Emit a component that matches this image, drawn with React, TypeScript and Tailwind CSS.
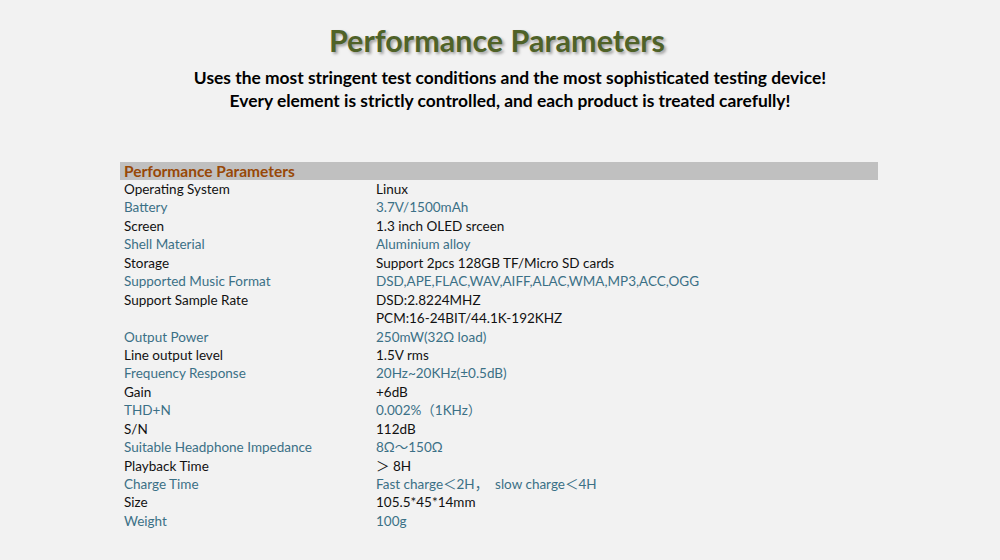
const rows: [string, string, boolean][] = [
  ["Operating System", "Linux", false],
  ["Battery", "3.7V/1500mAh", true],
  ["Screen", "1.3 inch OLED srceen", false],
  ["Shell Material", "Aluminium alloy", true],
  ["Storage", "Support 2pcs 128GB TF/Micro SD cards", false],
  ["Supported Music Format", "DSD,APE,FLAC,WAV,AIFF,ALAC,WMA,MP3,ACC,OGG", true],
  ["Support Sample Rate", "DSD:2.8224MHZ", false],
  ["", "PCM:16-24BIT/44.1K-192KHZ", false],
  ["Output Power", "250mW(32Ω load)", true],
  ["Line output level", "1.5V rms", false],
  ["Frequency Response", "20Hz~20KHz(±0.5dB)", true],
  ["Gain", "+6dB", false],
  ["THD+N", "0.002%（1KHz）", true],
  ["S/N", "112dB", false],
  ["Suitable Headphone Impedance", "8Ω～150Ω", true],
  ["Playback Time", "＞ 8H", false],
  ["Charge Time", "Fast charge＜2H，  slow charge＜4H", true],
  ["Size", "105.5*45*14mm", false],
  ["Weight", "100g", true],
];

export default function App() {
  return (
    <div className="w-[1000px] h-[560px] bg-[#f2f2f2] font-['Lato','Noto_Sans_CJK_SC',sans-serif] overflow-hidden">
      {/* heading */}
      <div className="pt-[21px] text-center">
        <h1 className="pr-[6px] text-[30.5px] leading-[38px] font-bold text-[#4f6228] [text-shadow:2px_2px_3px_rgba(0,0,0,0.35)]">
          Performance Parameters
        </h1>
        <div className="pl-[20px]">
          <p className="mt-[7px] text-[17.4px] leading-[23px] font-bold text-black">
            Uses the most stringent test conditions and the most sophisticated testing device!
          </p>
          <p className="text-[17.4px] leading-[23px] font-bold text-black">
            Every element is strictly controlled, and each product is treated carefully!
          </p>
        </div>
      </div>

      {/* table */}
      <div className="ml-[120px] mt-[50px] w-[758px]">
        <div className="h-[18px] bg-[#c0c0c0] pl-[4px] text-[15.5px] leading-[18px] font-bold text-[#984807]">
          Performance Parameters
        </div>
        {rows.map(([label, value, teal], i) => (
          <div
            key={i}
            className={`grid grid-cols-[252px_1fr] h-[18.45px] text-[13.5px] leading-[18.45px] pl-[4px] whitespace-pre ${
              teal ? "text-[#3b7086]" : "text-[#111111]"
            }`}
          >
            <span>{label}</span>
            <span>{value}</span>
          </div>
        ))}
      </div>
    </div>
  );
}
